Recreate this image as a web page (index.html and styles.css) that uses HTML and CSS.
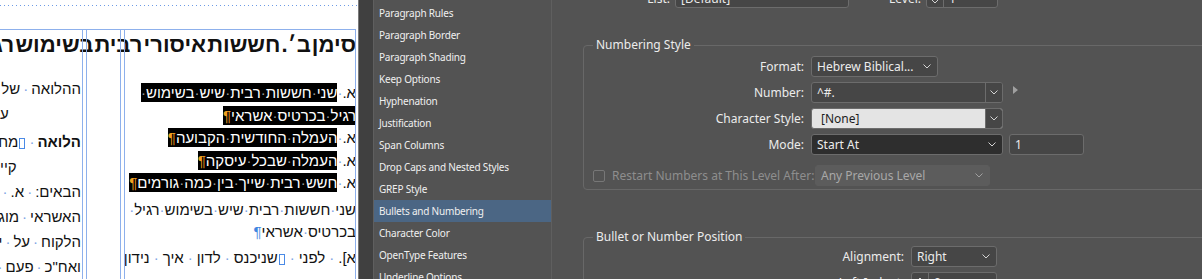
FILE: index.html
```html
<!DOCTYPE html>
<html lang="en">
<head>
    <meta charset="UTF-8">
    <meta name="viewport" content="width=device-width, initial-scale=1.0">
    <title>Paragraph Style Options</title>
    <link rel="stylesheet" href="styles.css">
</head>
<body>
<div class="screen">

    <!-- Document page with guides -->
    <div class="doc" dir="rtl" lang="he">
        <h1 class="doc-title">סימן ב׳. חששות איסורי רבית בשימוש רגיל בכרטיס</h1>
        <div class="cols">
            <div class="col col-right">
                <div class="ln"><span>א.</span><i>·</i><span class="hl">שני<i>·</i>חששות<i>·</i>רבית<i>·</i>שיש<i>·</i>בשימוש<i>·</i></span></div>
                <div class="ln"><span class="hl">רגיל<i>·</i>בכרטיס<i>·</i>אשראי<b>¶</b></span></div>
                <div class="ln"><span>א.</span><i>·</i><span class="hl">העמלה<i>·</i>החודשית<i>·</i>הקבועה<b>¶</b></span></div>
                <div class="ln"><span>א.</span><i>·</i><span class="hl">העמלה<i>·</i>שבכל<i>·</i>עיסקה<b>¶</b></span></div>
                <div class="ln"><span>א.</span><i>·</i><span class="hl">חשש<i>·</i>רבית<i>·</i>שייך<i>·</i>בין<i>·</i>כמה<i>·</i>גורמים<b>¶</b></span></div>
                <div class="ln para">שני<i>·</i>חששות<i>·</i>רבית<i>·</i>שיש<i>·</i>בשימוש<i>·</i>רגיל<i>·</i></div>
                <div class="ln">בכרטיס<i>·</i>אשראי<b class="pil">¶</b></div>
                <div class="ln para wide">א].<i>·</i>לפני<i>·</i><span class="anchor"></span>שניכנס<i>·</i>לדון<i>·</i>איך<i>·</i>נידון</div>
            </div>
            <div class="col col-mid"></div>
            <div class="col col-left">
                <div class="lt">ההלואה<i>·</i>של<i>·</i>הלקוח<i>·</i>לחברת</div>
                <div class="lt end">ע</div>
                <div class="lt gap"><strong>הלואה</strong><i>·</i><span class="anchor"></span>מחברת<i>·</i>האשראי</div>
                <div class="lt end">קיי</div>
                <div class="lt">הבאים:<i>·</i>א.<i>·</i>בכרטיס<i>·</i>חיוב</div>
                <div class="lt">האשראי<i>·</i>מוגדר<i>·</i>החיוב</div>
                <div class="lt">הלקוח<i>·</i>על<i>·</i>ידי<i>·</i>החברה</div>
                <div class="lt">ואח"כ<i>·</i>פעם<i>·</i>אחת<i>·</i>בחודש</div>
                <div class="lt">נחשב<i>·</i>שהיא<i>·</i>הלואה</div>
            </div>
        </div>

        <!-- layout guides drawn over the text -->
        <div class="guide dotted"></div>
        <div class="guide frame-top"></div>
        <div class="guide vline v1"></div>
        <div class="guide vline v2"></div>
        <div class="guide vline v3"></div>
        <div class="guide vline v4"></div>
        <div class="guide vline v5"></div>
    </div>

    <div class="pasteboard"></div>

    <!-- Category list -->
    <ul class="cats">
        <li>Paragraph Rules</li>
        <li>Paragraph Border</li>
        <li>Paragraph Shading</li>
        <li>Keep Options</li>
        <li>Hyphenation</li>
        <li>Justification</li>
        <li>Span Columns</li>
        <li>Drop Caps and Nested Styles</li>
        <li>GREP Style</li>
        <li class="active">Bullets and Numbering</li>
        <li>Character Color</li>
        <li>OpenType Features</li>
        <li>Underline Options</li>
    </ul>

    <!-- Bullets and Numbering settings -->
    <div class="dialog">
        <div class="top-row">
            <span class="lbl lbl-list">List:</span>
            <div class="field w-list">
                <span class="val">[Default]</span>
                <svg class="chev" width="8" height="5" viewBox="0 0 8 5"><path d="M0.5 0.5L4 4L7.5 0.5"/></svg>
            </div>
            <span class="lbl lbl-level">Level:</span>
            <div class="field stepper w-level">
                <span class="step-btn">
                    <svg class="chev up" width="8" height="5" viewBox="0 0 8 5"><path d="M0.5 4.5L4 1L7.5 4.5"/></svg>
                    <svg class="chev" width="8" height="5" viewBox="0 0 8 5"><path d="M0.5 0.5L4 4L7.5 0.5"/></svg>
                </span>
                <span class="val">1</span>
            </div>
        </div>

        <fieldset class="group group-num">
            <legend>Numbering Style</legend>
            <div class="row">
                <span class="lbl">Format:</span>
                <div class="field w-format">
                    <span class="val">Hebrew Biblical...</span>
                    <svg class="chev" width="8" height="5" viewBox="0 0 8 5"><path d="M0.5 0.5L4 4L7.5 0.5"/></svg>
                </div>
            </div>
            <div class="row">
                <span class="lbl">Number:</span>
                <div class="field combo w-wide">
                    <span class="val">^#.</span>
                    <span class="drop"><svg class="chev" width="8" height="5" viewBox="0 0 8 5"><path d="M0.5 0.5L4 4L7.5 0.5"/></svg></span>
                </div>
                <span class="flyout"></span>
            </div>
            <div class="row">
                <span class="lbl">Character Style:</span>
                <div class="field combo light w-wide">
                    <span class="val">[None]</span>
                    <span class="drop"><svg class="chev" width="8" height="5" viewBox="0 0 8 5"><path d="M0.5 0.5L4 4L7.5 0.5"/></svg></span>
                </div>
            </div>
            <div class="row">
                <span class="lbl">Mode:</span>
                <div class="field dark w-wide">
                    <span class="val">Start At</span>
                    <svg class="chev" width="8" height="5" viewBox="0 0 8 5"><path d="M0.5 0.5L4 4L7.5 0.5"/></svg>
                </div>
                <div class="field w-start"><span class="val">1</span></div>
            </div>
            <div class="row row-restart">
                <span class="check"></span>
                <span class="lbl-off">Restart Numbers at This Level After:</span>
                <div class="field off w-after">
                    <span class="val">Any Previous Level</span>
                    <svg class="chev" width="8" height="5" viewBox="0 0 8 5"><path d="M0.5 0.5L4 4L7.5 0.5"/></svg>
                </div>
            </div>
        </fieldset>

        <fieldset class="group group-pos">
            <legend>Bullet or Number Position</legend>
            <div class="row">
                <span class="lbl lbl-pos">Alignment:</span>
                <div class="field w-align">
                    <span class="val">Right</span>
                    <svg class="chev" width="8" height="5" viewBox="0 0 8 5"><path d="M0.5 0.5L4 4L7.5 0.5"/></svg>
                </div>
            </div>
            <div class="row">
                <span class="lbl lbl-pos">Left Indent:</span>
                <div class="field stepper w-align">
                    <span class="step-btn">
                        <svg class="chev up" width="8" height="5" viewBox="0 0 8 5"><path d="M0.5 4.5L4 1L7.5 4.5"/></svg>
                        <svg class="chev" width="8" height="5" viewBox="0 0 8 5"><path d="M0.5 0.5L4 4L7.5 0.5"/></svg>
                    </span>
                    <span class="val">0 mm</span>
                </div>
            </div>
        </fieldset>
    </div>

</div>
</body>
</html>
```

FILE: styles.css
```css
body {
    margin: 0;
    background-color: #535353;
    font-family: "Noto Sans", "Open Sans", sans-serif;
    overflow: hidden;
}
.screen {
    display: flex;
    width: 1202px;
    height: 279px;
    overflow: hidden;
}

/* ---------- document ---------- */
.doc {
    position: relative;
    flex: 0 0 358px;
    height: 279px;
    overflow: hidden;
    background-color: #fff;
    font-family: "Liberation Sans", "DejaVu Sans", sans-serif;
    color: #111;
}
.doc i {
    font-style: normal;
    color: #7ea4e4;
}
.doc-title {
    margin: 30px 2px 0 0;
    height: 30px;
    line-height: 30px;
    font-size: 22px;
    font-weight: bold;
    white-space: nowrap;
    word-spacing: -5px;
}
.cols {
    display: flex;
}
.col {
    overflow: hidden;
    white-space: nowrap;
    font-size: 15px;
}
.col-right {
    flex: 0 0 232px;
    padding: 22px 2px 0 0;
}
.col-mid {
    flex: 0 0 42px;
}
.col-left {
    flex: 0 0 81px;
    padding: 16px 1px 0 0;
}
.ln {
    height: 22.5px;
    line-height: 22.5px;
}
.ln.para {
    margin-top: 4px;
}
.ln.wide {
    margin-top: 3px;
}
.ln.wide i {
    margin: 0 4px;
}
.hl {
    background-color: #000;
    color: #fff;
    padding: 1px 0;
}
.hl i {
    color: #9a9a9a;
}
.hl b {
    color: #f0a020;
    font-weight: normal;
}
.pil {
    color: #3f86e0;
    font-weight: normal;
}
.anchor {
    display: inline-block;
    width: 4px;
    height: 9px;
    border: 1px solid #4a8ae6;
    margin: 0 1px;
    vertical-align: -2px;
}
.lt {
    height: 25px;
    line-height: 25px;
}
.lt i {
    margin: 0 3px;
}
.lt.gap {
    margin-top: 3px;
}
.lt.end {
    text-align: left;
}
.guide {
    position: absolute;
    background-color: #8db0ec;
}
.guide.dotted {
    top: 5px;
    left: 0;
    width: 357px;
    height: 1px;
    background: repeating-linear-gradient(to right, #6d9be6 0 1px, transparent 1px 4px);
}
.guide.frame-top {
    top: 29px;
    left: 0;
    width: 356px;
    height: 1px;
}
.guide.vline {
    top: 29px;
    bottom: 0;
    width: 1px;
}
.v1 { left: 82px; }
.v2 { left: 86px; }
.v3 { left: 120px; }
.v4 { left: 124px; }
.v5 { left: 355px; }

.pasteboard {
    flex: 0 0 14px;
    background-color: #404040;
    border-left: 1px solid #7a7a7a;
}

/* ---------- category list ---------- */
.cats {
    flex: 0 0 177px;
    margin: 0;
    padding: 2px 0 0 0;
    list-style: none;
    border-left: 1px solid #5f5f5f;
    border-right: 1px solid #5f5f5f;
    font-size: 10px;
    letter-spacing: -0.2px;
    color: #f0f0f0;
}
.cats li {
    height: 22px;
    line-height: 22px;
    padding-left: 5px;
    white-space: nowrap;
}
.cats li.active {
    background-color: #4b6684;
}

/* ---------- dialog ---------- */
.dialog {
    flex: 1;
    font-size: 12px;
    color: #ececec;
    overflow: hidden;
}
.top-row {
    display: flex;
    align-items: center;
    height: 19px;
    margin-top: -11px;
}
.lbl {
    text-align: right;
    white-space: nowrap;
}
.lbl-list {
    width: 118px;
}
.lbl-level {
    width: 72px;
}
.field {
    display: flex;
    align-items: center;
    box-sizing: border-box;
    height: 100%;
    background-color: #464646;
    border: 1px solid #6c6c6c;
    border-radius: 3px;
    white-space: nowrap;
    overflow: hidden;
}
.field .val {
    flex: 1;
    padding-left: 5px;
}
.chev {
    flex: none;
    margin-right: 6px;
    fill: none;
    stroke: #d4d4d4;
    stroke-width: 1;
}
.w-list {
    width: 174px;
    margin-left: 5px;
}
.w-level {
    width: 72px;
    margin-left: 5px;
}
.stepper .step-btn {
    display: flex;
    flex-direction: column;
    align-items: center;
    justify-content: space-between;
    box-sizing: border-box;
    width: 17px;
    height: 100%;
    padding: 4px 0;
    border-right: 1px solid #6c6c6c;
}
.stepper .step-btn .chev {
    margin: 0;
}

.group {
    box-sizing: border-box;
    width: 700px;
    margin: 0 0 0 31px;
    padding: 3px 0 3px 0;
    border: 1px solid #686868;
    border-radius: 4px;
    min-inline-size: 0;
}
.group legend {
    height: 16px;
    line-height: 16px;
    margin-left: 9px;
    padding: 0 3px;
}
.group-num {
    margin-top: 29px;
}
.group-pos {
    margin-top: 39px;
    padding-top: 1px;
}
.row {
    display: flex;
    align-items: center;
    height: 21px;
    margin-bottom: 5px;
}
.row .lbl {
    width: 220px;
    margin-right: 7px;
}
.row .lbl-pos {
    width: 320px;
}
.w-format {
    width: 127px;
}
.w-wide {
    width: 192px;
}
.w-start {
    width: 75px;
    margin-left: 6px;
}
.w-align {
    width: 86px;
}
.combo .drop {
    display: flex;
    align-items: center;
    justify-content: center;
    width: 16px;
    height: 100%;
    border-left: 1px solid #6c6c6c;
    background-color: #464646;
}
.combo .drop .chev {
    margin: 0;
}
.field.light {
    background-color: #e4e4e4;
    color: #1e1e1e;
}
.field.light .val {
    padding-left: 9px;
}
.field.dark {
    background-color: #2e2e2e;
}
.flyout {
    width: 0;
    height: 0;
    margin: 0 0 6px 10px;
    border-top: 4px solid transparent;
    border-bottom: 4px solid transparent;
    border-left: 5px solid #a0a0a0;
}
.row-restart {
    margin: 10px 0 0 0;
}
.check {
    box-sizing: border-box;
    width: 12px;
    height: 12px;
    margin-left: 9px;
    border: 1px solid #777;
    border-radius: 2px;
}
.lbl-off {
    width: 203px;
    margin-left: 7px;
    color: #8e8e8e;
    white-space: nowrap;
}
.field.off {
    background-color: #5c5c5c;
    border-color: #5c5c5c;
    color: #a8a8a8;
}
.field.off .chev {
    stroke: #a0a0a0;
}
.w-after {
    width: 175px;
}
```
